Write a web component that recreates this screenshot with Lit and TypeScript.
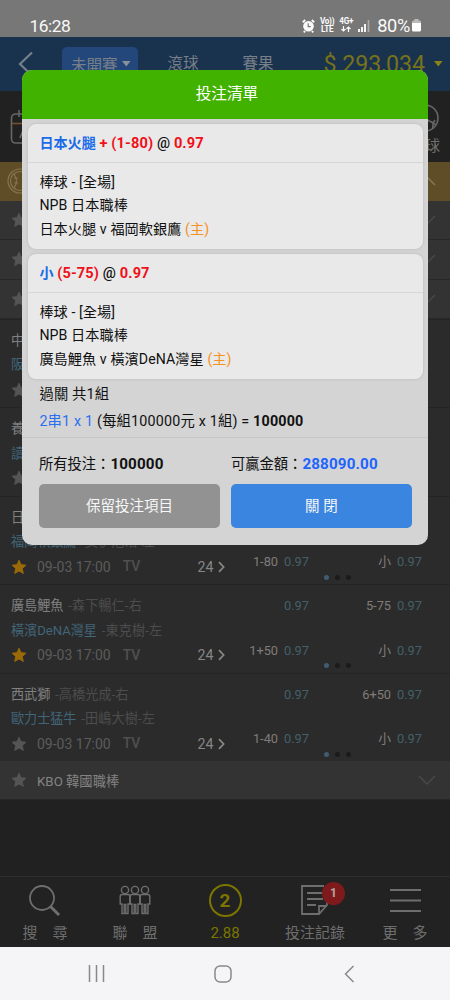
import { LitElement, html, css, svg } from "lit";
import { customElement, property } from "lit/decorators.js";

const star = html`<svg class="star" width="16" height="16" viewBox="0 0 16 16"><path fill="currentColor" stroke="currentColor" stroke-linejoin="round" d="M8 1.2l2 4.5 4.9.5-3.7 3.3 1.1 4.9L8 11.9l-4.3 2.5 1.1-4.9L1.1 6.2 6 5.7z"/></svg>`;
const chevron = (up = false) => html`<svg class="chev" width="18" height="12" viewBox="0 0 18 12"><path d=${up ? "M1 10l8-8 8 8" : "M1 2l8 8 8-8"} fill="none" stroke="currentColor" stroke-width="1.4"/></svg>`;

interface Match {
  home: string; homeP?: string; away: string; awayP?: string; fav?: boolean; partial?: boolean;
  top?: [string, string, string, string]; bottom?: [string, string, string, string];
}

const matches: Match[] = [
  { home: "中", away: "阪", partial: true },
  { home: "養", away: "讀", partial: true },
  { home: "日", away: "福岡軟銀鷹", awayP: "-莫伊尼洛-左", fav: true, bottom: ["1-80", "0.97", "小", "0.97"] },
  { home: "廣島鯉魚", homeP: "-森下暢仁-右", away: "橫濱DeNA灣星", awayP: "-東克樹-左", fav: true, top: ["", "0.97", "5-75", "0.97"], bottom: ["1+50", "0.97", "小", "0.97"] },
  { home: "西武獅", homeP: "-高橋光成-右", away: "歐力士猛牛", awayP: "-田嶋大樹-左", top: ["", "0.97", "6+50", "0.97"], bottom: ["1-40", "0.97", "小", "0.97"] },
];

@customElement("match-row")
class MatchRow extends LitElement {
  @property({ attribute: false }) match!: Match;
  static styles = css`
    :host { display: block; height: 88.5px; box-sizing: border-box; border-top: 1px solid #242424; background: #2b2b2b; }
    .grid { display: grid; grid-template-columns: 225px 84px 113px; height: 100%; }
    .teams { padding: 8px 0 0 11px; }
    .team { height: 24.5px; line-height: 25px; font-size: 13.1px; color: #818181; white-space: nowrap; }
    .away { color: #416579; }
    .pitcher { color: #4d4d4d; margin-left: 1.5px; letter-spacing: .15px; }
    .meta { display: flex; align-items: center; height: 26px; font-size: 14px; color: #5c5c5c; }
    .star { color: #555; margin-right: 10px; }
    .fav .star { color: #9a6a08; }
    .tv { margin-left: 12px; font-weight: 500; color: #505050; line-height: 16px; padding-bottom: 1px; }
    .count { margin-left: auto; color: #868686; font-size: 14.2px; display: flex; align-items: center; gap: 4.500px; }
    .odds { padding-top: 10px; display: flex; flex-direction: column; gap: 22.3px; }
    .odd { display: flex; justify-content: flex-end; gap: 6px; height: 22px; line-height: 22px; font-size: 12.8px; color: #436069; }
    .line { color: #807c79; }
    .dots { display: flex; gap: 6px; position: absolute; left: 324px; margin-top: 78px; }
    .dot { width: 5px; height: 5px; border-radius: 50%; background: #1b1b1b; }
    .on { background: #3f5c73; }
  `;
  render() {
    const m = this.match;
    if (m.partial) {
      return html`<div class="teams"><div class="team">${m.home}</div><div class="team away">${m.away}</div><div class="meta">${star}</div></div>`;
    }
    const col = (i: number) => html`<div class="odds">${[m.top, m.bottom].map(r => html`
      <div class="odd">${r ? html`<span class="line">${r[i]}</span><span>${r[i + 1]}</span>` : ""}</div>`)}</div>`;
    return html`<div class="grid ${m.fav ? "fav" : ""}">
      <div class="teams">
        <div class="team">${m.home} <span class="pitcher">${m.homeP}</span></div>
        <div class="team away">${m.away} <span class="pitcher">${m.awayP}</span></div>
        <div class="meta">${star}<span>09-03 17:00</span><span class="tv">TV</span>
          <span class="count">24<svg width="7" height="12" viewBox="0 0 7 12"><path d="M1 1.2L5.6 6 1 10.8" fill="none" stroke="#868686" stroke-width="1.8"/></svg></span></div>
      </div>
      ${col(0)}${col(2)}
      <div class="dots"><i class="dot on"></i><i class="dot"></i><i class="dot"></i></div>
    </div>`;
  }
}

@customElement("league-row")
class LeagueRow extends LitElement {
  @property() name = "";
  @property({ type: Boolean }) gold = false;
  static styles = css`
    :host { display: block; }
    .row { height: 39.2px; box-sizing: border-box; border-bottom: 1px solid #282828; background: #333; display: flex; align-items: center; padding: 0 14px 0 11px; color: #838383; font-size: 13.3px; }
    .gold { background: #5f4d28; border-color: #5f4d28; padding-left: 7px; }
    .star { color: #555; margin-right: 10px; }
    .gold .chev { color: #8a7b58; }
    .chev { margin-left: auto; color: #494949; }
    .ball { margin-right: 8px; }
  `;
  render() {
    return html`<div class="row ${this.gold ? "gold" : ""}">
      ${this.gold ? html`<svg class="ball" width="26" height="26" viewBox="0 0 26 26" fill="none" stroke="#85744c" stroke-width="1.2"><circle cx="13" cy="13" r="12"/><circle cx="13" cy="13" r="9.5"/><path d="M7 6q5 7 0 14M19 6q-5 7 0 14M7 10h4M7 15h4"/></svg>` : star}
      <span>${this.name}</span>${chevron(this.gold)}</div>`;
  }
}

interface Bet { pick: string; line: string; game: string; }

@customElement("bet-slip")
class BetSlip extends LitElement {
  static styles = css`
    :host { display: block; box-sizing: border-box; width: 406px; height: 474.5px; border-radius: 10px; overflow: hidden; background: #d4d4d4; color: #111; font-size: 14.3px; }
    .title { height: 49px; line-height: 49px; text-align: center; color: #fff; background: #42b200; font-size: 15.6px; padding-left: 3px; }
    .cards { padding: 5px 5.5px 0; display: flex; flex-direction: column; gap: 5px; }
    .card { height: 125px; box-sizing: border-box; background: #e9e9e9; border-radius: 8px; box-shadow: 0 0 3px rgba(0,0,0,.14); }
    .pick { height: 38.5px; box-sizing: border-box; line-height: 38px; padding-left: 11.5px; border-bottom: 1.5px solid #d6d6d6; font-weight: 500; font-size: 14.6px; letter-spacing: .12px; }
    .blue { color: #1a6be8; font-weight: 700; font-size: 14.1px; letter-spacing: 0; }
    .red { color: #ef1018; font-weight: 700; }
    .info { padding: 8.5px 11.5px 0; line-height: 23.4px; font-size: 14.15px; letter-spacing: .08px; }
    .host { color: #f5921e; }
    .sum { padding: 2px 17px 0; height: 58.5px; box-sizing: border-box; border-bottom: 1px solid #c6c6c6; line-height: 27px; white-space: nowrap; letter-spacing: .19px; }
    .link { color: #2b6ff0; }
    b { font-weight: 700; }
    .totals, .actions { display: grid; grid-template-columns: 181px 181px; gap: 11px; padding: 0 16.5px; }
    .totals { height: 46.5px; line-height: 53px; white-space: nowrap; }
    .totals b { font-size: 15.2px; letter-spacing: .15px; }
    .win { color: #1f64ff; }
    .btn { height: 44px; line-height: 45px; border-radius: 5px; text-align: center; color: #f7f7f7; background: #929292; font-size: 14.5px; }
    .close { background: #3a85df; }
  `;
  render() {
    const bets: Bet[] = [
      { pick: "日本火腿", line: "+ (1-80)", game: "日本火腿 v 福岡軟銀鷹" },
      { pick: "小", line: "(5-75)", game: "廣島鯉魚 v 橫濱DeNA灣星" },
    ];
    return html`
      <div class="title">投注清單</div>
      <div class="cards">${bets.map(b => html`<div class="card">
        <div class="pick"><span class="blue">${b.pick}</span> <span class="red">${b.line}</span> @ <span class="red">0.97</span></div>
        <div class="info"><div>棒球 - [全場]</div><div>NPB 日本職棒</div><div>${b.game} <span class="host">(主)</span></div></div>
      </div>`)}</div>
      <div class="sum"><div>過關 共1組</div><div><span class="link">2串1 x 1</span> (每組100000元 x 1組) = <b>100000</b></div></div>
      <div class="totals"><div>所有投注：<b>100000</b></div><div>可贏金額：<b class="win">288090.00</b></div></div>
      <div class="actions"><div class="btn">保留投注項目</div><div class="btn close">關 閉</div></div>`;
  }
}

@customElement("app-root")
class AppRoot extends LitElement {
  static styles = css`
    :host { display: block; position: relative; width: 450px; height: 1000px; overflow: hidden; background: #212121; font-family: Roboto, "Noto Sans CJK TC", sans-serif; }
    .screen { display: flex; flex-direction: column; height: 1000px; }
    .status { height: 36.5px; box-sizing: border-box; background: #777; color: #fafafa; display: flex; align-items: center; padding: 15px 28px 0 29.5px; font-size: 18.2px; }
    .clock { flex: 1; font-size: 17.4px; letter-spacing: -.5px; }
    .pct { letter-spacing: -.3px; margin-right: 1px; }
    .net { font-size: 8.2px; line-height: 7.5px; font-weight: 700; text-align: center; margin-left: 5px; display: block; letter-spacing: -.3px; }
    .sig { margin: 0 7px 0 5px; }
    .header { height: 54.5px; background: #19324e; display: flex; color: #777f89; font-size: 15.5px; padding: 10px 7px 0 17px; box-sizing: border-box; }
    .back { margin: 4px 29px 0 0; }
    .pill { width: 76px; height: 33px; box-sizing: border-box; padding: 2px 0 0 9px; border-radius: 5px; background: #23477a; display: flex; align-items: center; gap: 4px; }
    .nav { line-height: 35px; margin-left: 29.5px; }
    .nav2 { margin-left: 44px; }
    .money { margin-left: auto; height: 34px; color: #77721a; font-size: 23.2px; line-height: 34px; display: flex; align-items: center; gap: 9px; white-space: nowrap; }
    .sports { height: 71px; box-sizing: border-box; padding: 13px 10px 0 10px; display: flex; justify-content: space-between; }
    .sport { color: #6f6f6f; font-size: 15px; line-height: 20px; display: flex; flex-direction: column; align-items: flex-end; }
    .fill { flex: 1; }
    .tabs { height: 71px; box-sizing: border-box; border-top: 1.5px solid #2d2d2d; background: #222; display: grid; grid-template-columns: repeat(5, 90px); }
    .tab { padding-top: 7px; display: flex; flex-direction: column; align-items: center; color: #6e6e6e; font-size: 15px; line-height: 20px; gap: 6px; position: relative; white-space: pre; }
    .tab svg { display: block; }
    .coin { width: 33px; height: 33px; box-sizing: border-box; border: 2px solid #7c7600; border-radius: 50%; text-align: center; line-height: 29px; font-size: 19px; font-weight: 700; }
    .slip { color: #7c7600; }
    .badge { position: absolute; left: 52px; top: 4.500px; width: 23px; height: 23px; border-radius: 50%; background: #7e1a1c; color: #b4a6a6; font-size: 12px; font-weight: 700; line-height: 23px; text-align: center; }
    .sys { height: 53px; background: #f5f5f7; display: grid; grid-template-columns: 126px 129.500px 11px; align-items: center; padding-left: 88px; box-sizing: border-box; }
    .modal { position: absolute; left: 22.4px; top: 70px; }
  `;
  private icon(body: unknown, w = 34) {
    return html`<svg width=${w} height="33" viewBox="0 0 ${w} 33" fill="none" stroke="#6e6e6e" stroke-width="1.8">${body}</svg>`;
  }
  private person(x: number) {
    return svg`<circle cx=${x} cy="6" r="3.6"/><path d="M${x - 3} 10.5h6q1.8 0 1.8 2v7.5h-1.8v9.500h-2.2v-9h-1.600v9h-2.2V20h-1.8v-7.500q0-2 1.8-2z"/>`;
  }
  render() {
    return html`<div class="screen">
      <div class="status"><span class="clock">16:28</span>
        <svg width="13" height="14" viewBox="0 0 13 14"><circle cx="6.5" cy="7.3" r="5.3" fill="#fafafa"/><path d="M.8 3.3L3.2 1M12.2 3.3L9.8 1M3 12l-1.2 1.4M10 12l1.2 1.4" stroke="#fafafa" stroke-width="1.9"/><path d="M6.2 4.2v3.4h2.6" fill="none" stroke="#777" stroke-width="1.2"/></svg>
        <span class="net">Vo))<br>LTE</span>
        <span class="net">4G+<br><svg width="10" height="6" viewBox="0 0 10 6" fill="none" stroke="#fafafa" stroke-width="1.2"><path d="M2.5 0v5M.5 3l2 2 2-2M7.5 6V1M5.5 3l2-2 2 2"/></svg></span>
        <svg class="sig" width="12" height="12" viewBox="0 0 12 12"><path d="M1 12V9M4 12V7M7 12V4" stroke="#fafafa" stroke-width="1.9"/><path d="M10.5 12V0" stroke="#aaa" stroke-width="1.7"/></svg>
        <span class="pct">80%</span>
        <svg width="11" height="13" viewBox="0 0 11 13"><path fill="#bbb" d="M3.5 0h4v1.5h-4zM1 3q0-1.5 1.5-1.5h6Q10 1.5 10 3v2H1z"/><path fill="#fff" d="M1 4h9v7q0 1.5-1.5 1.5h-6Q1 12.5 1 11z"/></svg>
      </div>
      <div class="header">
        <svg class="back" width="16" height="26" viewBox="0 0 16 26"><path d="M15 1.5L3 13l12 11.5" fill="none" stroke="#75808b" stroke-width="2.2"/></svg>
        <div class="pill"><span>未開賽</span><svg width="9" height="6"><path d="M0 0h8.5L4.25 5.5z" fill="#87919e"/></svg></div>
        <span class="nav">滾球</span><span class="nav nav2">賽果</span>
        <div class="money"><span>$ 293,034</span><svg width="9" height="6"><path d="M0 0h8.5L4.25 5.5z" fill="#8a8418"/></svg></div>
      </div>
      <div class="sports">
        <svg width="36" height="40" viewBox="0 0 36 40" fill="none" stroke="#666" stroke-width="1.6"><rect x="1.5" y="10" width="32" height="29" rx="4"/><path d="M9 6v7"/><path d="M2 19.500h31" stroke="#75502c"/><path d="M10 34l4-10 4 10"/></svg>
        <div class="sport"><svg width="38" height="32" viewBox="0 0 38 32" fill="none" stroke="#666" stroke-width="1.6"><circle cx="23" cy="14" r="13"/><path d="M11 17q12-5 23 4M31 25q-1-5 2-9"/></svg><span>球</span></div>
      </div>
      <league-row gold></league-row>
      <league-row></league-row>
      <league-row></league-row>
      <league-row></league-row>
      ${matches.map(m => html`<match-row .match=${m}></match-row>`)}
      <league-row name="KBO 韓國職棒"></league-row>
      <div class="fill"></div>
      <div class="tabs">
        <div class="tab">${this.icon(svg`<circle cx="14" cy="14" r="12"/><path d="M22.5 22.5l8.5 8.5" stroke-width="3"/>`)}<span>搜　尋</span></div>
        <div class="tab">${this.icon(svg`<g stroke-width="1.4">${this.person(7)}${this.person(17)}${this.person(27)}</g>`)}<span>聯　盟</span></div>
        <div class="tab slip"><div class="coin">2</div><span>2.88</span></div>
        <div class="tab">${this.icon(svg`<path d="M29 17v4l-8 9H4V2h22M21 30v-8h8M9 9h16M9 15h16M9 21h9"/>`)}<span>投注記錄</span><span class="badge">1</span></div>
        <div class="tab">${this.icon(svg`<path d="M2 6h31M2 16.5h31M2 27h31" stroke-width="2.2"/>`)}<span>更　多</span></div>
      </div>
      <div class="sys">
        <svg width="17" height="17" viewBox="0 0 17 17"><path d="M1.5 0v17M8.5 0v17M15.5 0v17" stroke="#89898b" stroke-width="1.5"/></svg>
        <svg width="18" height="18" viewBox="0 0 18 18"><rect x="1" y="1" width="16" height="16" rx="5" fill="none" stroke="#89898b" stroke-width="1.5"/></svg>
        <svg width="11" height="18" viewBox="0 0 11 18"><path d="M9.5 1L1.5 9l8 8" fill="none" stroke="#89898b" stroke-width="1.5"/></svg>
      </div>
    </div>
    <bet-slip class="modal"></bet-slip>`;
  }
}
